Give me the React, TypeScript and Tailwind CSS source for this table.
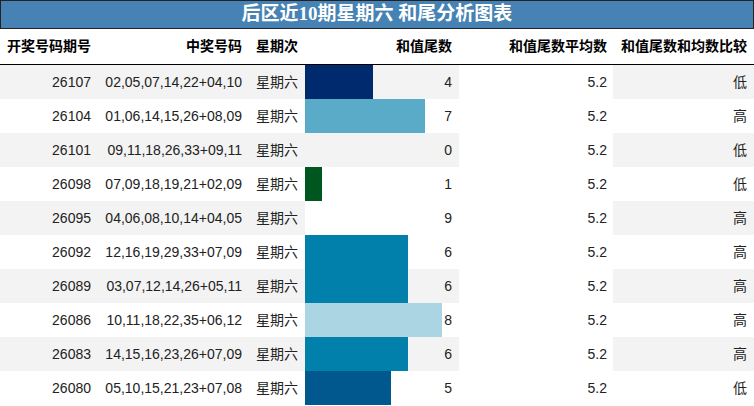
import React from "react";

interface Draw {
  issue: string;
  numbers: string;
  weekday: string;
  tail: number;
  avg: string;
  compare: string;
}

const draws: Draw[] = [
  { issue: "26107", numbers: "02,05,07,14,22+04,10", weekday: "星期六", tail: 4, avg: "5.2", compare: "低" },
  { issue: "26104", numbers: "01,06,14,15,26+08,09", weekday: "星期六", tail: 7, avg: "5.2", compare: "高" },
  { issue: "26101", numbers: "09,11,18,26,33+09,11", weekday: "星期六", tail: 0, avg: "5.2", compare: "低" },
  { issue: "26098", numbers: "07,09,18,19,21+02,09", weekday: "星期六", tail: 1, avg: "5.2", compare: "低" },
  { issue: "26095", numbers: "04,06,08,10,14+04,05", weekday: "星期六", tail: 9, avg: "5.2", compare: "高" },
  { issue: "26092", numbers: "12,16,19,29,33+07,09", weekday: "星期六", tail: 6, avg: "5.2", compare: "高" },
  { issue: "26089", numbers: "03,07,12,14,26+05,11", weekday: "星期六", tail: 6, avg: "5.2", compare: "高" },
  { issue: "26086", numbers: "10,11,18,22,35+06,12", weekday: "星期六", tail: 8, avg: "5.2", compare: "高" },
  { issue: "26083", numbers: "14,15,16,23,26+07,09", weekday: "星期六", tail: 6, avg: "5.2", compare: "高" },
  { issue: "26080", numbers: "05,10,15,21,23+07,08", weekday: "星期六", tail: 5, avg: "5.2", compare: "低" },
];

// bar colour per tail value
const barColors: Record<number, string> = {
  0: "transparent",
  1: "#00561f",
  4: "#002a6e",
  5: "#00588f",
  6: "#0080aa",
  7: "#59abc8",
  8: "#abd5e2",
  9: "#ffffff",
};

const font = { fontFamily: '"Liberation Sans", "Noto Sans CJK SC", sans-serif' };

export default function App() {
  return (
    <div className="w-[754px] h-[406px] bg-white text-[14px] text-[#222]" style={font}>
      <div
        className="h-[29px] bg-[#4682b4] border border-[#222] flex items-center justify-center text-white font-bold text-[19px]"
        style={{ fontFamily: '"Liberation Serif", "Noto Sans CJK SC", serif' }}
      >
        后区近10期星期六 和尾分析图表
      </div>

      <div className="flex h-[36px] border-b border-black font-bold text-black items-center">
        <div className="w-[98px] px-[7px] text-right">开奖号码期号</div>
        <div className="w-[151px] px-[7px] text-right">中奖号码</div>
        <div className="w-[56px] px-[7px]">星期次</div>
        <div className="w-[154px] px-[7px] text-right">和值尾数</div>
        <div className="w-[154px] px-[6px] text-right">和值尾数平均数</div>
        <div className="w-[141px] px-[7px] text-right">和值尾数和均数比较</div>
      </div>

      {draws.map((d, i) => {
        const shade = i % 2 === 0 ? "bg-[#f3f3f3]" : "bg-white";
        return (
          <div key={d.issue} className="flex h-[34px] items-stretch">
            <div className={`w-[98px] px-[7px] flex items-center justify-end ${shade}`}>{d.issue}</div>
            <div className={`w-[151px] px-[7px] flex items-center justify-end ${shade}`}>{d.numbers}</div>
            <div className={`w-[56px] px-[7px] flex items-center ${shade}`}>{d.weekday}</div>
            <div className={`relative w-[154px] flex items-center justify-end px-[7px] ${shade}`}>
              <div
                className="absolute left-0 top-0 h-full"
                style={{ width: `${(d.tail / 9) * 100}%`, background: barColors[d.tail] }}
              />
              <span className="relative">{d.tail}</span>
            </div>
            <div className="w-[154px] px-[6px] flex items-center justify-end bg-white">{d.avg}</div>
            <div className={`w-[141px] px-[7px] flex items-center justify-end ${shade}`}>{d.compare}</div>
          </div>
        );
      })}
    </div>
  );
}
